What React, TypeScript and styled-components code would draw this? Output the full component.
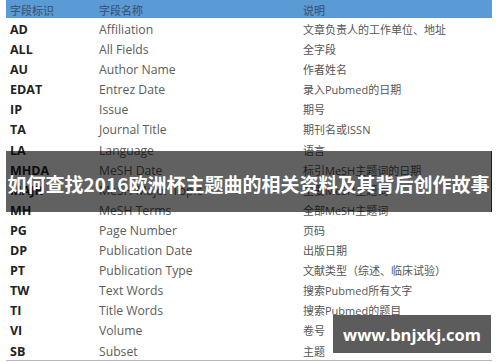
import React from "react"
import styled, { createGlobalStyle } from "styled-components"

const GlobalStyle = createGlobalStyle`
  html, body {
    margin: 0;
    padding: 0;
    background: #ffffff;
  }
`

const Page = styled.div`
  position: relative;
  width: 500px;
  height: 362px;
  overflow: hidden;
  background: #ffffff;
  font-family: "Open Sans", "Noto Sans CJK SC", sans-serif;
`

const Table = styled.div`
  margin-left: 6px;
  width: 486px;
  border-bottom: 1px solid #b8b8b8;
`

const Row = styled.div<{ $head?: boolean }>`
  display: grid;
  grid-template-columns: 89px 204px 1fr;
  padding-left: 4px;
  height: ${(p) => (p.$head ? "18px" : "20.1px")};
  align-items: ${(p) => (p.$head ? "center" : "start")};
  background: ${(p) => (p.$head ? "#5b9bd5" : "transparent")};
  box-sizing: border-box;
  padding-top: ${(p) => (p.$head ? "1px" : "4px")};
`

const HeadCell = styled.div`
  font-family: "Noto Sans CJK SC", sans-serif;
  font-size: 11px;
  font-weight: 500;
  color: #3e5a7e;
  line-height: 16px;
`

const Code = styled.div`
  font-size: 12.5px;
  font-weight: 700;
  color: #222222;
  line-height: 16px;
`

const Name = styled.div`
  font-size: 12.2px;
  color: #5c5c5c;
  line-height: 16px;
`

const Note = styled.div`
  font-family: "Open Sans", "Noto Sans CJK SC", sans-serif;
  font-size: 11px;
  color: #555555;
  line-height: 16px;
  white-space: nowrap;
`

const TitleBand = styled.div`
  position: absolute;
  left: 6px;
  top: 151px;
  width: 486px;
  height: 61px;
  background: rgba(0, 0, 0, 0.62);
  border-right: 1px solid #1e1e1e;
  box-sizing: border-box;
  display: flex;
  align-items: center;
  justify-content: center;
  padding-top: 4px;
`

const Title = styled.h1`
  margin: 0;
  font-family: "Noto Sans CJK SC", sans-serif;
  font-size: 19px;
  font-weight: 700;
  color: #ffffff;
  white-space: nowrap;
  letter-spacing: 0;
`

const Watermark = styled.div`
  position: absolute;
  left: 333px;
  top: 315px;
  width: 158px;
  height: 38px;
  background: rgba(70, 70, 70, 0.88);
  display: flex;
  align-items: center;
  justify-content: center;
  font-family: "Open Sans", sans-serif;
  font-size: 16.5px;
  font-weight: 700;
  color: #ffffff;
`

const fields: [string, string, string][] = [
  ["AD", "Affiliation", "文章负责人的工作单位、地址"],
  ["ALL", "All Fields", "全字段"],
  ["AU", "Author Name", "作者姓名"],
  ["EDAT", "Entrez Date", "录入Pubmed的日期"],
  ["IP", "Issue", "期号"],
  ["TA", "Journal Title", "期刊名或ISSN"],
  ["LA", "Language", "语言"],
  ["MHDA", "MeSH Date", "标引MeSH主题词的日期"],
  ["MAJR", "MeSH Major Topic", "主要MeSH主题词"],
  ["MH", "MeSH Terms", "全部MeSH主题词"],
  ["PG", "Page Number", "页码"],
  ["DP", "Publication Date", "出版日期"],
  ["PT", "Publication Type", "文献类型（综述、临床试验）"],
  ["TW", "Text Words", "搜索Pubmed所有文字"],
  ["TI", "Title Words", "搜索Pubmed的题目"],
  ["VI", "Volume", "卷号"],
  ["SB", "Subset", "主题"],
]

const App = () => {
  return (
    <Page>
      <GlobalStyle />
      <Table>
        <Row $head>
          <HeadCell>字段标识</HeadCell>
          <HeadCell>字段名称</HeadCell>
          <HeadCell>说明</HeadCell>
        </Row>
        {fields.map(([code, name, note]) => (
          <Row key={code}>
            <Code>{code}</Code>
            <Name>{name}</Name>
            <Note>{note}</Note>
          </Row>
        ))}
      </Table>
      <TitleBand>
        <Title>如何查找2016欧洲杯主题曲的相关资料及其背后创作故事</Title>
      </TitleBand>
      <Watermark>www.bnjxkj.com</Watermark>
    </Page>
  )
}

export default App
